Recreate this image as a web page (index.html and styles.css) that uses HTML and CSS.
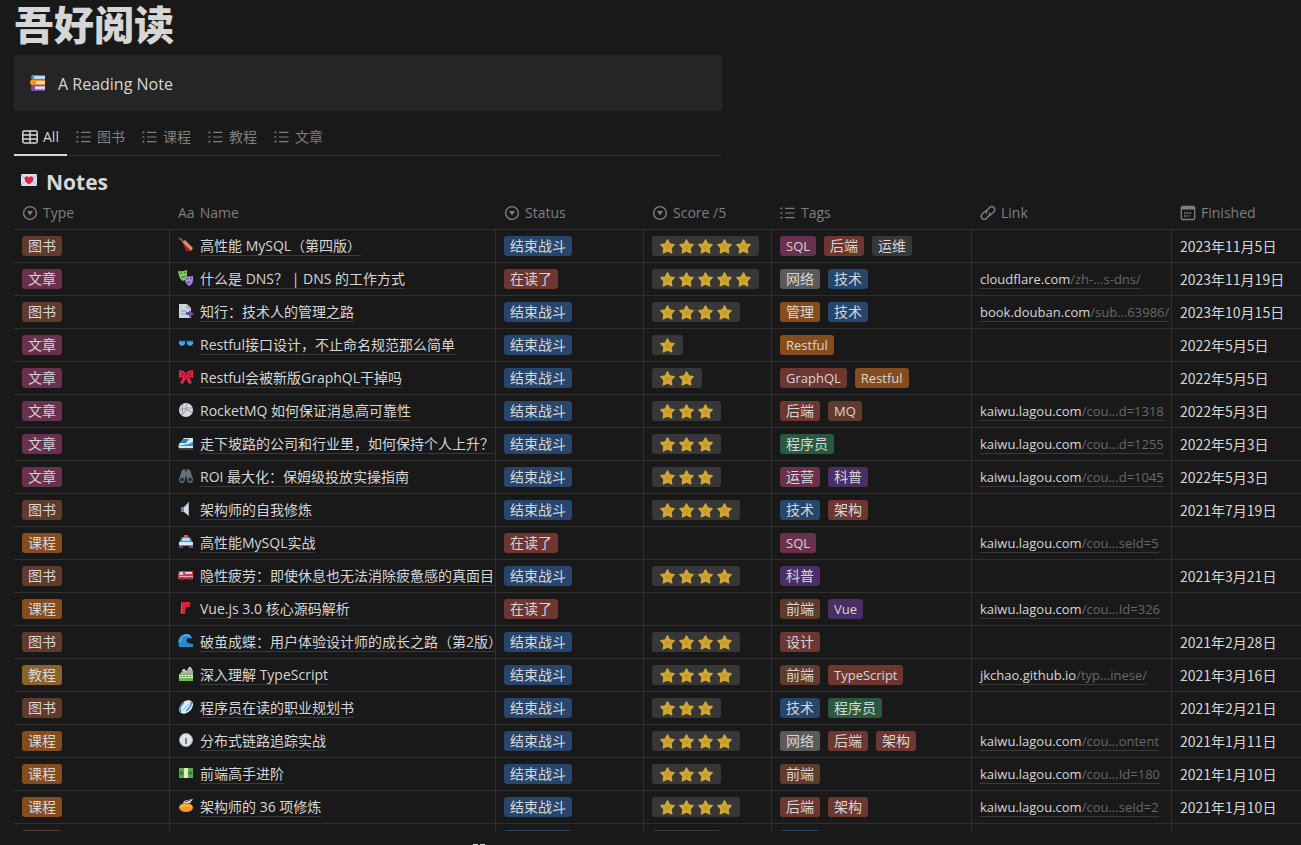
FILE: index.html
```
<!DOCTYPE html>
<html lang="zh-CN">
<head>
    <meta charset="UTF-8">
    <meta name="viewport" content="width=device-width, initial-scale=1.0">
    <title>吾好阅读</title>
    <link rel="stylesheet" href="styles.css">
</head>

<body>
    <!-- shared icons -->
    <svg class="sprite" aria-hidden="true">
        <symbol id="star" viewBox="0 0 16 16">
            <path d="M8 1 10.3 5.2 15.2 6 11.8 9.6 12.5 14.8 8 12.7 3.500 14.8 4.2 9.6.8 6 5.7 5.2z" fill="#d2a832" stroke="#d2a832" stroke-width="1.4" stroke-linejoin="round"/>
            <path d="m8 5 .9 2 2.600.5-2 1.700.5 2L8 10.1l-2 1.100.5-2-2-1.700 2.600-.5z" fill="#c3982c"/>
        </symbol>
        <symbol id="select" viewBox="0 0 16 16">
            <circle cx="8" cy="8" r="6.4" fill="none" stroke="currentColor" stroke-width="1.4"/>
            <path d="M5 6h6l-3 4.6z" fill="currentColor"/>
        </symbol>
        <symbol id="list" viewBox="0 0 16 16">
            <path d="M.5 2.6h1.8v1.6H.5zM.5 7.2h1.8v1.6H.5zM.5 11.8h1.8v1.6H.5zM5 2.8h9.5V4H5zM5 7.4h9.5v1.2H5zM5 12h9.5v1.2H5z" fill="currentColor"/>
        </symbol>
    </svg>

    <header class="page-head">
        <h1>吾好阅读</h1>
        <div class="callout">
            <svg class="icon" viewBox="0 0 16 16">
                <path d="M2 0h13v5H2q-2-2 0-5" fill="#3f8ed0"/><path d="M4 1.3h11v2.4H4z" fill="#dce6f0"/>
                <path d="M1 5h14v5H1q-2-2.5 0-5" fill="#f7941e"/><path d="M6 6.3h9v2.4H6z" fill="#e5e2ea"/>
                <path d="M2 10h13v6H2q-2.5-3 0-6" fill="#7b52ab"/><path d="M5 11.3h10v3H5z" fill="#e2d9f0"/>
            </svg>
            <p>A Reading Note</p>
        </div>
        <nav class="tabs">
            <button class="tab active" type="button">
                <svg class="icon" viewBox="0 0 16 16"><path d="M2.2 2h11.6Q15.2 2 15.2 3.4v9.2q0 1.4-1.4 1.4H2.2Q.8 14 .8 12.6V3.4Q.8 2 2.2 2zM.8 6h14.4M.8 10h14.4M8 2v12" fill="none" stroke="currentColor" stroke-width="1.5"/></svg>
                All
            </button>
            <button class="tab" type="button"><svg class="icon"><use href="#list"/></svg>图书</button>
            <button class="tab" type="button"><svg class="icon"><use href="#list"/></svg>课程</button>
            <button class="tab" type="button"><svg class="icon"><use href="#list"/></svg>教程</button>
            <button class="tab" type="button"><svg class="icon"><use href="#list"/></svg>文章</button>
        </nav>
    </header>

    <h2>
        <svg class="icon" viewBox="0 0 16 16">
            <rect y="2" width="16" height="12" rx="1" fill="#d5e2f0"/><path d="m0 3 8 6 8-6M0 13l6-5m10 5-6-5" fill="none" stroke="#9db3cb"/>
            <path d="M8 12.5C1 8 4 3.5 6.3 4.2Q7.5 4.5 8 5.7q.5-1.2 1.7-1.5C12 3.5 15 8 8 12.5" fill="#e8233f"/>
        </svg>
        Notes
    </h2>

    <div class="table-wrap">
        <table>
            <colgroup>
                <col class="col-type"><col class="col-name"><col class="col-status"><col class="col-score">
                <col class="col-tags"><col class="col-link"><col>
            </colgroup>
            <thead>
                <tr>
                    <th><div class="label"><svg class="icon"><use href="#select"/></svg>Type</div></th>
                    <th><div class="label"><span>Aa</span>Name</div></th>
                    <th><div class="label"><svg class="icon"><use href="#select"/></svg>Status</div></th>
                    <th><div class="label"><svg class="icon"><use href="#select"/></svg>Score /5</div></th>
                    <th><div class="label"><svg class="icon"><use href="#list"/></svg>Tags</div></th>
                    <th><div class="label"><svg class="icon" viewBox="0 0 16 16"><g transform="rotate(-45 8 8)" fill="none" stroke="currentColor" stroke-width="1.4"><path d="M9.500 8.500a3 3 0 0 1-2 2.200H3a3 3 0 0 1 0-6h3.500a3 3 0 0 1 2.700 1.800"/><path d="M6.500 7.500a3 3 0 0 1 2-2.200H13a3 3 0 0 1 0 6H9.500a3 3 0 0 1-2.700-1.800"/></g></svg>Link</div></th>
                    <th><div class="label"><svg class="icon" viewBox="0 0 16 16"><path d="M2.8 1.5h10.4q1.5 0 1.5 1.5v10q0 1.5-1.5 1.5H2.8q-1.5 0-1.5-1.5V3q0-1.5 1.5-1.5z" fill="none" stroke="currentColor" stroke-width="1.3"/><path d="M1.5 2h13v2.500h-13z" fill="currentColor"/><path d="M4 8h8M4 11h6" stroke="currentColor" stroke-width="1.6" stroke-dasharray="1.6 1"/></svg>Finished</div></th>
                </tr>
            </thead>
            <tbody>
                <tr>
                    <td><span class="tag brown">图书</span></td>
                    <td><div class="name"><svg class="icon" viewBox="0 0 16 16"><path d="m1 1 4 3" stroke="#8c5543" stroke-width="2"/><path d="m4 5 3-2 8 8-2 3z" fill="#dc8b67"/><path d="m5 7 8 7H8z" fill="#b31532"/></svg><a href="#">高性能 MySQL（第四版）</a></div></td>
                    <td><span class="tag blue">结束战斗</span></td>
                    <td><span class="score"><svg><use href="#star"/></svg><svg><use href="#star"/></svg><svg><use href="#star"/></svg><svg><use href="#star"/></svg><svg><use href="#star"/></svg></span></td>
                    <td><div class="tags"><span class="tag latin pink">SQL</span><span class="tag red">后端</span><span class="tag dark">运维</span></div></td>
                    <td></td>
                    <td>2023年11月5日</td>
                </tr>
                <tr>
                    <td><span class="tag pink">文章</span></td>
                    <td><div class="name"><svg class="icon" viewBox="0 0 16 16"><path d="M0 1q4 1 9-1v5q-1 5-4 6Q1 9 0 1" fill="#83c85b"/><path d="m2 4 2-1m2 0 2-1M3 7q2 1 4-1" stroke="#2c6e2e" fill="none"/><path d="M7 6q4 1 8 0 1 8-4 10-5-3-4-10" fill="#a98be3"/><path d="m8 9 2-.5m2 0 2 .5m-5 4q2-2 4 0" stroke="#593f91" fill="none"/></svg><a href="#">什么是 DNS？ | DNS 的工作方式</a></div></td>
                    <td><span class="tag red">在读了</span></td>
                    <td><span class="score"><svg><use href="#star"/></svg><svg><use href="#star"/></svg><svg><use href="#star"/></svg><svg><use href="#star"/></svg><svg><use href="#star"/></svg></span></td>
                    <td><div class="tags"><span class="tag gray">网络</span><span class="tag blue">技术</span></div></td>
                    <td><a class="link" href="#">cloudflare.com<span>/zh-...s-dns/</span></a></td>
                    <td>2023年11月19日</td>
                </tr>
                <tr>
                    <td><span class="tag brown">图书</span></td>
                    <td><div class="name"><svg class="icon" viewBox="0 0 16 16"><path d="M1 1h8l4 4v10H1z" fill="#cbd6e2"/><path d="M9 1v4h4M3 8h6M3 11h6" fill="none" stroke="#8295ad"/><path d="M8 9h3V7l5 4-5 4v-3H8z" fill="#6c4a9e"/></svg><a href="#">知行：技术人的管理之路</a></div></td>
                    <td><span class="tag blue">结束战斗</span></td>
                    <td><span class="score"><svg><use href="#star"/></svg><svg><use href="#star"/></svg><svg><use href="#star"/></svg><svg><use href="#star"/></svg></span></td>
                    <td><div class="tags"><span class="tag orange">管理</span><span class="tag blue">技术</span></div></td>
                    <td><a class="link" href="#">book.douban.com<span>/sub...63986/</span></a></td>
                    <td>2023年10月15日</td>
                </tr>
                <tr>
                    <td><span class="tag pink">文章</span></td>
                    <td><div class="name"><svg class="icon" viewBox="0 0 16 16"><path d="M1 5h6q1 4-3 5-4-1-3-5m8 0h6q1 4-3 5-4-1-3-5" fill="#46a5e5"/><path d="M1 5h14" stroke="#176092"/></svg><a href="#">Restful接口设计，不止命名规范那么简单</a></div></td>
                    <td><span class="tag blue">结束战斗</span></td>
                    <td><span class="score"><svg><use href="#star"/></svg></span></td>
                    <td><div class="tags"><span class="tag latin orange">Restful</span></div></td>
                    <td></td>
                    <td>2022年5月5日</td>
                </tr>
                <tr>
                    <td><span class="tag pink">文章</span></td>
                    <td><div class="name"><svg class="icon" viewBox="0 0 16 16"><path d="M1 1q4 0 7 3 3-3 7-3v8l-4-1 3 6-3 1-3-6-3 6-3-1 3-6-4 1z" fill="#e72545"/><path d="m2 3 4 2-4 2m12-4-4 2 4 2M6 9l2-5 2 5" fill="none" stroke="#a50d31"/></svg><a href="#">Restful会被新版GraphQL干掉吗</a></div></td>
                    <td><span class="tag blue">结束战斗</span></td>
                    <td><span class="score"><svg><use href="#star"/></svg><svg><use href="#star"/></svg></span></td>
                    <td><div class="tags"><span class="tag latin red">GraphQL</span><span class="tag latin orange">Restful</span></div></td>
                    <td></td>
                    <td>2022年5月5日</td>
                </tr>
                <tr>
                    <td><span class="tag pink">文章</span></td>
                    <td><div class="name"><svg class="icon" viewBox="0 0 16 16"><circle cx="8" cy="8" r="7" fill="#d8dce0"/><path d="M8 8Q7 4 10 1M8 8q4-1 6 3M8 8q-2 4-5 5M5 2Q3 7 5 11M2 8q5-3 12-2" fill="none" stroke="#8c949c"/></svg><a href="#">RocketMQ 如何保证消息高可靠性</a></div></td>
                    <td><span class="tag blue">结束战斗</span></td>
                    <td><span class="score"><svg><use href="#star"/></svg><svg><use href="#star"/></svg><svg><use href="#star"/></svg></span></td>
                    <td><div class="tags"><span class="tag red">后端</span><span class="tag latin brown">MQ</span></div></td>
                    <td><a class="link" href="#">kaiwu.lagou.com<span>/cou...d=1318</span></a></td>
                    <td>2022年5月3日</td>
                </tr>
                <tr>
                    <td><span class="tag pink">文章</span></td>
                    <td><div class="name"><svg class="icon" viewBox="0 0 16 16"><path d="M6 3h9v10H1q-2-3 2-6z" fill="#d9e7f2"/><path d="M6 4h5L8 8H2z" fill="#277fb8"/><path d="M0 10q8 1 15-3v4H1z" fill="#3296d5"/><path d="M1 14h14" stroke="#526374"/></svg><a href="#">走下坡路的公司和行业里，如何保持个人上升？</a></div></td>
                    <td><span class="tag blue">结束战斗</span></td>
                    <td><span class="score"><svg><use href="#star"/></svg><svg><use href="#star"/></svg><svg><use href="#star"/></svg></span></td>
                    <td><div class="tags"><span class="tag green">程序员</span></div></td>
                    <td><a class="link" href="#">kaiwu.lagou.com<span>/cou...d=1255</span></a></td>
                    <td>2022年5月3日</td>
                </tr>
                <tr>
                    <td><span class="tag pink">文章</span></td>
                    <td><div class="name"><svg class="icon" viewBox="0 0 16 16"><path d="m4 2 3-1 1 4 1-4 3 1 3 9q0 4-3 4t-3-4l-1-4-1 4q0 4-3 4t-3-4z" fill="#65717e"/><circle cx="4" cy="11.5" r="2" fill="#252d35"/><circle cx="12" cy="11.5" r="2" fill="#252d35"/></svg><a href="#">ROI 最大化：保姆级投放实操指南</a></div></td>
                    <td><span class="tag blue">结束战斗</span></td>
                    <td><span class="score"><svg><use href="#star"/></svg><svg><use href="#star"/></svg><svg><use href="#star"/></svg></span></td>
                    <td><div class="tags"><span class="tag pink">运营</span><span class="tag purple">科普</span></div></td>
                    <td><a class="link" href="#">kaiwu.lagou.com<span>/cou...d=1045</span></a></td>
                    <td>2022年5月3日</td>
                </tr>
                <tr>
                    <td><span class="tag brown">图书</span></td>
                    <td><div class="name"><svg class="icon" viewBox="0 0 16 16"><path d="M3 6h3v5H3z" fill="#718697"/><path d="m6 6 5-5v14l-5-4z" fill="#d0dce7"/><path d="M10.5 1v14" stroke="#9fadba"/></svg><a href="#">架构师的自我修炼</a></div></td>
                    <td><span class="tag blue">结束战斗</span></td>
                    <td><span class="score"><svg><use href="#star"/></svg><svg><use href="#star"/></svg><svg><use href="#star"/></svg><svg><use href="#star"/></svg></span></td>
                    <td><div class="tags"><span class="tag blue">技术</span><span class="tag red">架构</span></div></td>
                    <td></td>
                    <td>2021年7月19日</td>
                </tr>
                <tr>
                    <td><span class="tag orange">课程</span></td>
                    <td><div class="name"><svg class="icon" viewBox="0 0 16 16"><path d="M6 1h4v2H6z" fill="#f04c52"/><path d="m4 3h8l2 4 1 5H1l1-5z" fill="#3a9bdb"/><path d="m5 4h6l1 3H4z" fill="#b2dcf3"/><path d="M1 8h14v3H1z" fill="#dce6ed"/><path d="M1 12h4v2H1zM11 12h4v2h-4z" fill="#515c66"/></svg><a href="#">高性能MySQL实战</a></div></td>
                    <td><span class="tag red">在读了</span></td>
                    <td></td>
                    <td><div class="tags"><span class="tag latin pink">SQL</span></div></td>
                    <td><a class="link" href="#">kaiwu.lagou.com<span>/cou...seId=5</span></a></td>
                    <td></td>
                </tr>
                <tr>
                    <td><span class="tag brown">图书</span></td>
                    <td><div class="name"><svg class="icon" viewBox="0 0 16 16"><path d="M1 4h14v8H0V7z" fill="#e52f4b"/><path d="M2 5h3v3H1zM7 5h7v2H7z" fill="#c5dae8"/><path d="M1 9.5h14" stroke="#f4aab4"/><circle cx="4" cy="12" r="1.5" fill="#4a4650"/><circle cx="12" cy="12" r="1.5" fill="#4a4650"/></svg><a href="#">隐性疲劳：即使休息也无法消除疲惫感的真面目</a></div></td>
                    <td><span class="tag blue">结束战斗</span></td>
                    <td><span class="score"><svg><use href="#star"/></svg><svg><use href="#star"/></svg><svg><use href="#star"/></svg><svg><use href="#star"/></svg></span></td>
                    <td><div class="tags"><span class="tag purple">科普</span></div></td>
                    <td></td>
                    <td>2021年3月21日</td>
                </tr>
                <tr>
                    <td><span class="tag orange">课程</span></td>
                    <td><div class="name"><svg class="icon" viewBox="0 0 16 16"><path d="M3 2h9v5H8l-1 7H3z" fill="#da2039"/><path d="M12 2v5" stroke="#871a28"/><path d="m4 4-1 9" stroke="#ff5467"/></svg><a href="#">Vue.js 3.0 核心源码解析</a></div></td>
                    <td><span class="tag red">在读了</span></td>
                    <td></td>
                    <td><div class="tags"><span class="tag brown">前端</span><span class="tag latin purple">Vue</span></div></td>
                    <td><a class="link" href="#">kaiwu.lagou.com<span>/cou...Id=326</span></a></td>
                    <td></td>
                </tr>
                <tr>
                    <td><span class="tag brown">图书</span></td>
                    <td><div class="name"><svg class="icon" viewBox="0 0 16 16"><path d="M1 14Q-2 3 7 1q6-1 7 5-3-2-5 0-2 4 6 5v3z" fill="#2589d0"/><path d="M2 9q1-6 6-7 4 0 5 3" fill="none" stroke="#7ac7ef"/></svg><a href="#">破茧成蝶：用户体验设计师的成长之路（第2版）</a></div></td>
                    <td><span class="tag blue">结束战斗</span></td>
                    <td><span class="score"><svg><use href="#star"/></svg><svg><use href="#star"/></svg><svg><use href="#star"/></svg><svg><use href="#star"/></svg></span></td>
                    <td><div class="tags"><span class="tag red">设计</span></div></td>
                    <td></td>
                    <td>2021年2月28日</td>
                </tr>
                <tr>
                    <td><span class="tag yellow">教程</span></td>
                    <td><div class="name"><svg class="icon" viewBox="0 0 16 16"><path d="m1 9 5-6 2 2 4-4 3 4v4z" fill="#a9aeb0"/><path d="m4 5 2-2 2 3m2-3 2-2 2 3" stroke="#e2e6e7" fill="none"/><path d="M1 8h14v7H1z" fill="#73b44c"/><path d="M1 9h14v3H1z" fill="#e9e5c4"/><path d="M2 10.5h12" stroke="#507c42" stroke-dasharray="2 1"/></svg><a href="#">深入理解 TypeScript</a></div></td>
                    <td><span class="tag blue">结束战斗</span></td>
                    <td><span class="score"><svg><use href="#star"/></svg><svg><use href="#star"/></svg><svg><use href="#star"/></svg><svg><use href="#star"/></svg></span></td>
                    <td><div class="tags"><span class="tag brown">前端</span><span class="tag latin red">TypeScript</span></div></td>
                    <td><a class="link" href="#">jkchao.github.io<span>/typ...inese/</span></a></td>
                    <td>2021年3月16日</td>
                </tr>
                <tr>
                    <td><span class="tag brown">图书</span></td>
                    <td><div class="name"><svg class="icon" viewBox="0 0 16 16"><ellipse cx="8" cy="8" rx="8" ry="5.5" transform="rotate(-42 8 8)" fill="#e0edf6"/><path d="M3 13Q0 8 6 4m7-1q1 4-5 9" fill="none" stroke="#3189c7" stroke-width="1.5"/><path d="m5 11 6-6" stroke="#8eacc1"/></svg><a href="#">程序员在读的职业规划书</a></div></td>
                    <td><span class="tag blue">结束战斗</span></td>
                    <td><span class="score"><svg><use href="#star"/></svg><svg><use href="#star"/></svg><svg><use href="#star"/></svg></span></td>
                    <td><div class="tags"><span class="tag blue">技术</span><span class="tag green">程序员</span></div></td>
                    <td></td>
                    <td>2021年2月21日</td>
                </tr>
                <tr>
                    <td><span class="tag orange">课程</span></td>
                    <td><div class="name"><svg class="icon" viewBox="0 0 16 16"><circle cx="8" cy="8" r="6.5" fill="#e0e5ea" stroke="#9fabb5"/><path d="M8 12V6" stroke="#51606c" stroke-width="1.5"/></svg><a href="#">分布式链路追踪实战</a></div></td>
                    <td><span class="tag blue">结束战斗</span></td>
                    <td><span class="score"><svg><use href="#star"/></svg><svg><use href="#star"/></svg><svg><use href="#star"/></svg><svg><use href="#star"/></svg></span></td>
                    <td><div class="tags"><span class="tag gray">网络</span><span class="tag red">后端</span><span class="tag red">架构</span></div></td>
                    <td><a class="link" href="#">kaiwu.lagou.com<span>/cou...ontent</span></a></td>
                    <td>2021年1月11日</td>
                </tr>
                <tr>
                    <td><span class="tag orange">课程</span></td>
                    <td><div class="name"><svg class="icon" viewBox="0 0 16 16"><path d="M1 3h14v10H1z" fill="#5aac48"/><path d="M6 3h4v10H6z" fill="#e6e8bd"/><circle cx="3.5" cy="8" r="2" fill="#337b36"/><circle cx="12.5" cy="8" r="2" fill="#337b36"/></svg><a href="#">前端高手进阶</a></div></td>
                    <td><span class="tag blue">结束战斗</span></td>
                    <td><span class="score"><svg><use href="#star"/></svg><svg><use href="#star"/></svg><svg><use href="#star"/></svg></span></td>
                    <td><div class="tags"><span class="tag brown">前端</span></div></td>
                    <td><a class="link" href="#">kaiwu.lagou.com<span>/cou...Id=180</span></a></td>
                    <td>2021年1月10日</td>
                </tr>
                <tr>
                    <td><span class="tag orange">课程</span></td>
                    <td><div class="name"><svg class="icon" viewBox="0 0 16 16"><ellipse cx="8" cy="9.5" rx="7" ry="4.5" fill="#f39a28"/><path d="M2 9q6-3 12 0" fill="none" stroke="#ffd176"/><path d="M5 5q1-3 5-3l5-1-3 4" fill="#dad5d0"/><path d="m7 4 5-2" stroke="#474247"/></svg><a href="#">架构师的 36 项修炼</a></div></td>
                    <td><span class="tag blue">结束战斗</span></td>
                    <td><span class="score"><svg><use href="#star"/></svg><svg><use href="#star"/></svg><svg><use href="#star"/></svg><svg><use href="#star"/></svg></span></td>
                    <td><div class="tags"><span class="tag red">后端</span><span class="tag red">架构</span></div></td>
                    <td><a class="link" href="#">kaiwu.lagou.com<span>/cou...seId=2</span></a></td>
                    <td>2021年1月10日</td>
                </tr>
                <!-- next row, cut off by the scroll area -->
                <tr>
                    <td><span class="tag blank brown"></span></td>
                    <td></td>
                    <td><span class="tag blank wide blue"></span></td>
                    <td><span class="score"><svg></svg><svg></svg><svg></svg></span></td>
                    <td><span class="tag blank blue"></span></td>
                    <td></td>
                    <td></td>
                </tr>
            </tbody>
        </table>
    </div>

    <footer>
        <svg viewBox="0 0 14 2"><path d="M1 1h5v1H1zM8 1h5v1H8z" fill="#d4d4d4"/></svg>
    </footer>
</body>
</html>
```

FILE: styles.css
```
* {
    box-sizing: border-box;
}

body {
    margin: 0;
    padding-left: 14px;
    height: 100vh;
    display: flex;
    flex-direction: column;
    overflow: hidden;
    background-color: #191919;
    color: #d6d6d6;
    font-family: "Open Sans", "Noto Sans CJK SC", sans-serif;
    font-size: 14px;
    line-height: 20px;
}

a {
    color: inherit;
    text-decoration: none;
}

.sprite {
    position: absolute;
    width: 0;
    height: 0;
}

.icon {
    width: 16px;
    height: 16px;
    flex-shrink: 0;
}

.page-head {
    max-width: 708px;
}

h1 {
    margin: 0;
    padding-bottom: 5px;
    font-size: 40px;
    line-height: 50px;
    font-weight: 900;
}

.callout {
    display: flex;
    align-items: center;
    gap: 12px;
    height: 56px;
    padding: 0 16px;
    border-radius: 3px;
    background-color: #252525;
    font-size: 16px;
}

.callout p {
    margin: 0;
    padding-top: 2px;
}

/* view tabs */
.tabs {
    display: flex;
    gap: 1px;
    padding-top: 8px;
    border-bottom: 1px solid #2f2f2f;
}

.tab {
    display: flex;
    align-items: center;
    gap: 5px;
    height: 37px;
    margin-bottom: -1px;
    padding: 0 8px;
    border: 0;
    border-bottom: 2px solid transparent;
    background: none;
    color: #7f7f7f;
    font: inherit;
}

.tab.active {
    border-color: #d6d6d6;
    color: #d6d6d6;
}

h2 {
    display: flex;
    align-items: center;
    gap: 9px;
    margin: 0;
    padding: 11px 7px 0;
    font-size: 21px;
    line-height: 30px;
}

h2 .icon {
    margin-bottom: 4px;
}

/* notes table */
.table-wrap {
    flex: 1;
    min-height: 0;
    overflow: hidden;
}

table {
    width: 100%;
    table-layout: fixed;
    border-collapse: separate;
    border-spacing: 0;
}

.col-type { width: 156px; }
.col-name { width: 326px; }
.col-status { width: 148px; }
.col-score { width: 128px; }
.col-tags { width: 200px; }
.col-link { width: 200px; }

th,
td {
    height: 33px;
    padding: 0 0 0 8px;
    border-bottom: 1px solid #2f2f2f;
    text-align: left;
    white-space: nowrap;
    overflow: hidden;
}

th {
    color: #7f7f7f;
    font-weight: 400;
}

td {
    border-right: 1px solid #2f2f2f;
}

td:last-child {
    border-right: 0;
    font-family: "Noto Sans CJK SC", sans-serif;
}

.label,
.name,
.tags {
    display: flex;
    align-items: center;
}

.label {
    gap: 5px;
}

.name {
    gap: 6px;
}

.name .icon {
    margin-bottom: 2px;
}

.tags {
    gap: 8px;
}

.name a,
.link {
    border-bottom: 1px solid #3a3a3a;
    line-height: 18px;
}

.link {
    font-size: 13px;
    font-weight: 500;
}

.link span {
    color: #686868;
}

.tag {
    display: block;
    width: fit-content;
    height: 20px;
    padding: 0 6px;
    border-radius: 3px;
}

.latin { font-size: 13px; }
.blank { width: 40px; }
.wide { width: 68px; }

.brown { background-color: #603b2c; }
.pink { background-color: #69314c; }
.blue { background-color: #28456c; }
.red { background-color: #6e3630; }
.orange { background-color: #854c1d; }
.yellow { background-color: #89632a; }
.green { background-color: #2b593f; }
.purple { background-color: #492f64; }
.gray { background-color: #5a5a5a; }
.dark { background-color: #373737; }

.score {
    display: flex;
    align-items: center;
    gap: 4px;
    width: fit-content;
    height: 20px;
    padding: 1px 8px 0;
    border-radius: 3px;
    background-color: #373737;
}

.score svg {
    width: 15px;
    height: 15px;
}

footer {
    display: flex;
    align-items: flex-end;
    height: 14px;
    padding-left: 458px;
}

footer svg {
    width: 14px;
    height: 2px;
}
```
